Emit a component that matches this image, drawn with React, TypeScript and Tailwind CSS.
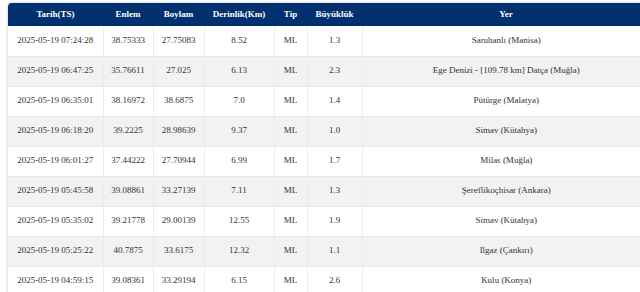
import React from 'react';

const rows = [
  ['2025-05-19 07:24:28', '38.75333', '27.75083', '8.52', 'ML', '1.3', 'Saruhanlı (Manisa)'],
  ['2025-05-19 06:47:25', '35.76611', '27.025', '6.13', 'ML', '2.3', 'Ege Denizi - [109.78 km] Datça (Muğla)'],
  ['2025-05-19 06:35:01', '38.16972', '38.6875', '7.0', 'ML', '1.4', 'Pütürge (Malatya)'],
  ['2025-05-19 06:18:20', '39.2225', '28.98639', '9.37', 'ML', '1.0', 'Simav (Kütahya)'],
  ['2025-05-19 06:01:27', '37.44222', '27.70944', '6.99', 'ML', '1.7', 'Milas (Muğla)'],
  ['2025-05-19 05:45:58', '39.08861', '33.27139', '7.11', 'ML', '1.3', 'Şereflikoçhisar (Ankara)'],
  ['2025-05-19 05:35:02', '39.21778', '29.00139', '12.55', 'ML', '1.9', 'Simav (Kütahya)'],
  ['2025-05-19 05:25:22', '40.7875', '33.6175', '12.32', 'ML', '1.1', 'Ilgaz (Çankırı)'],
  ['2025-05-19 04:59:15', '39.08361', '33.29194', '6.15', 'ML', '2.6', 'Kulu (Konya)'],
];

const headers = ['Tarih(TS)', 'Enlem', 'Boylam', 'Derinlik(Km)', 'Tip', 'Büyüklük', 'Yer'];
const widths = ['w-[95px]', 'w-[50px]', 'w-[51px]', 'w-[70px]', 'w-[33px]', 'w-[55px]', 'w-auto'];

export default function App() {
  return (
    <div className="w-[640px] h-[292px] overflow-hidden bg-white" style={{ fontFamily: '"Liberation Serif", "Times New Roman", serif' }}>
      <div className="pt-[3px] pl-[8px]">
        <table className="w-[642px] table-fixed border-collapse rounded-t-[4px] overflow-hidden shadow-[0_0_3px_rgba(0,0,0,0.25)] text-[9px]">
          <colgroup>
            {widths.map((w, i) => (
              <col key={i} className={w} />
            ))}
          </colgroup>
          <thead>
            <tr className="bg-[#01306e] text-white h-[23px]">
              {headers.map((h) => (
                <th key={h} className="font-bold text-center p-0">
                  {h}
                </th>
              ))}
            </tr>
          </thead>
          <tbody>
            {rows.map((r, i) => (
              <tr key={i} className={`h-[30px] border-b border-[#e8e8e8] ${i % 2 === 1 ? 'bg-[#f2f2f2]' : 'bg-white'}`}>
                {r.map((c, j) => (
                  <td key={j} className={`text-center text-[#333] p-0 ${j < 6 ? 'border-r border-[#ececec]' : ''}`}>
                    {c}
                  </td>
                ))}
              </tr>
            ))}
          </tbody>
        </table>
      </div>
    </div>
  );
}
